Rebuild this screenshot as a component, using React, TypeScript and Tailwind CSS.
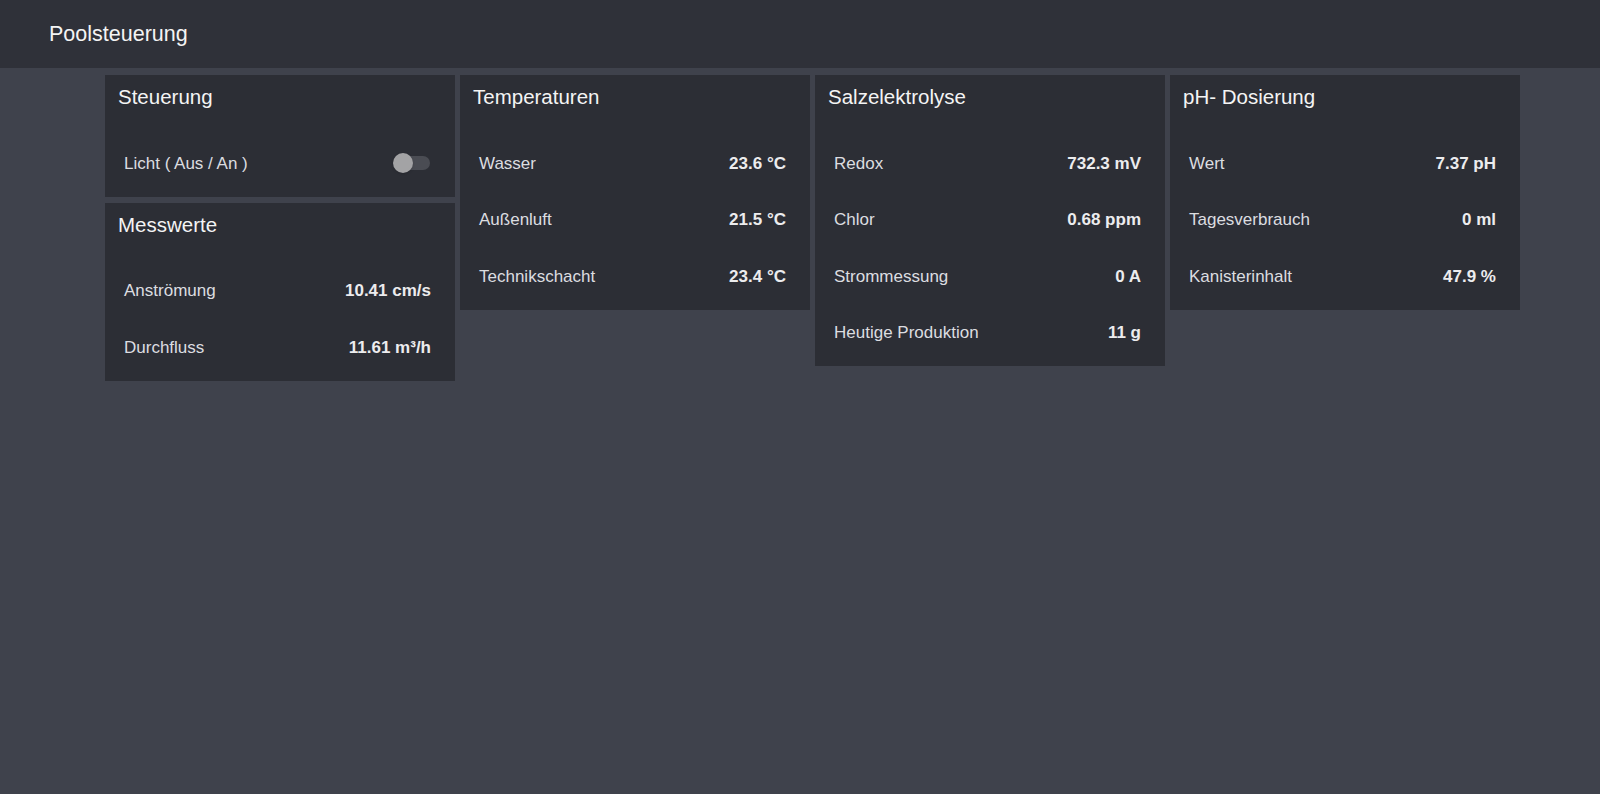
import type { ReactNode } from 'react';

type Reading = { label: string; value: string };

const temperatures: Reading[] = [
  { label: 'Wasser', value: '23.6 °C' },
  { label: 'Außenluft', value: '21.5 °C' },
  { label: 'Technikschacht', value: '23.4 °C' },
];

const electrolysis: Reading[] = [
  { label: 'Redox', value: '732.3 mV' },
  { label: 'Chlor', value: '0.68 ppm' },
  { label: 'Strommessung', value: '0 A' },
  { label: 'Heutige Produktion', value: '11 g' },
];

const phDosing: Reading[] = [
  { label: 'Wert', value: '7.37 pH' },
  { label: 'Tagesverbrauch', value: '0 ml' },
  { label: 'Kanisterinhalt', value: '47.9 %' },
];

const flow: Reading[] = [
  { label: 'Anströmung', value: '10.41 cm/s' },
  { label: 'Durchfluss', value: '11.61 m³/h' },
];

function Card({ title, children }: { title: string; children: ReactNode }) {
  return (
    <section className="w-[350px] bg-[#2c2e35] pb-[5px]">
      <h2 className="h-[36px] pl-[13px] pt-[8px] text-[20.5px] font-normal leading-[28px] text-[#f4f4f4]">
        {title}
      </h2>
      <div className="mt-[24px]">{children}</div>
    </section>
  );
}

function Row({ label, children }: { label: string; children: ReactNode }) {
  return (
    <div className="flex h-[56.5px] items-center justify-between pl-[19px] pr-[24px] text-[17px]">
      <span className="text-[#dcdde0]">{label}</span>
      {children}
    </div>
  );
}

function Readings({ items }: { items: Reading[] }) {
  return (
    <>
      {items.map((r) => (
        <Row key={r.label} label={r.label}>
          <span className="font-bold text-[#ececee]">{r.value}</span>
        </Row>
      ))}
    </>
  );
}

function Switch({ on }: { on: boolean }) {
  return (
    <span className="relative mr-px flex h-[20px] w-[37px] items-center" role="switch" aria-checked={on}>
      <span className="ml-[3px] h-[14px] w-[34px] rounded-full bg-[#4a4c53]" />
      <span className="absolute left-0 top-0 h-[20px] w-[20px] rounded-full bg-[#a3a3a5] shadow" />
    </span>
  );
}

export default function App() {
  return (
    <div
      className="min-h-screen bg-[#3f424c]"
      style={{ fontFamily: '"Liberation Sans", Arial, sans-serif' }}
    >
      <header className="flex h-[68px] items-center bg-[#2f3139] pl-[49px]">
        <h1 className="text-[21.5px] font-normal text-[#f4f4f4]">Poolsteuerung</h1>
      </header>

      <main className="flex items-start gap-[5px] pl-[105px] pt-[7px]">
        <div className="flex flex-col gap-[6px]">
          <Card title="Steuerung">
            <Row label="Licht ( Aus / An )">
              <Switch on={false} />
            </Row>
          </Card>
          <Card title="Messwerte">
            <Readings items={flow} />
          </Card>
        </div>
        <Card title="Temperaturen">
          <Readings items={temperatures} />
        </Card>
        <Card title="Salzelektrolyse">
          <Readings items={electrolysis} />
        </Card>
        <Card title="pH- Dosierung">
          <Readings items={phDosing} />
        </Card>
      </main>
    </div>
  );
}
